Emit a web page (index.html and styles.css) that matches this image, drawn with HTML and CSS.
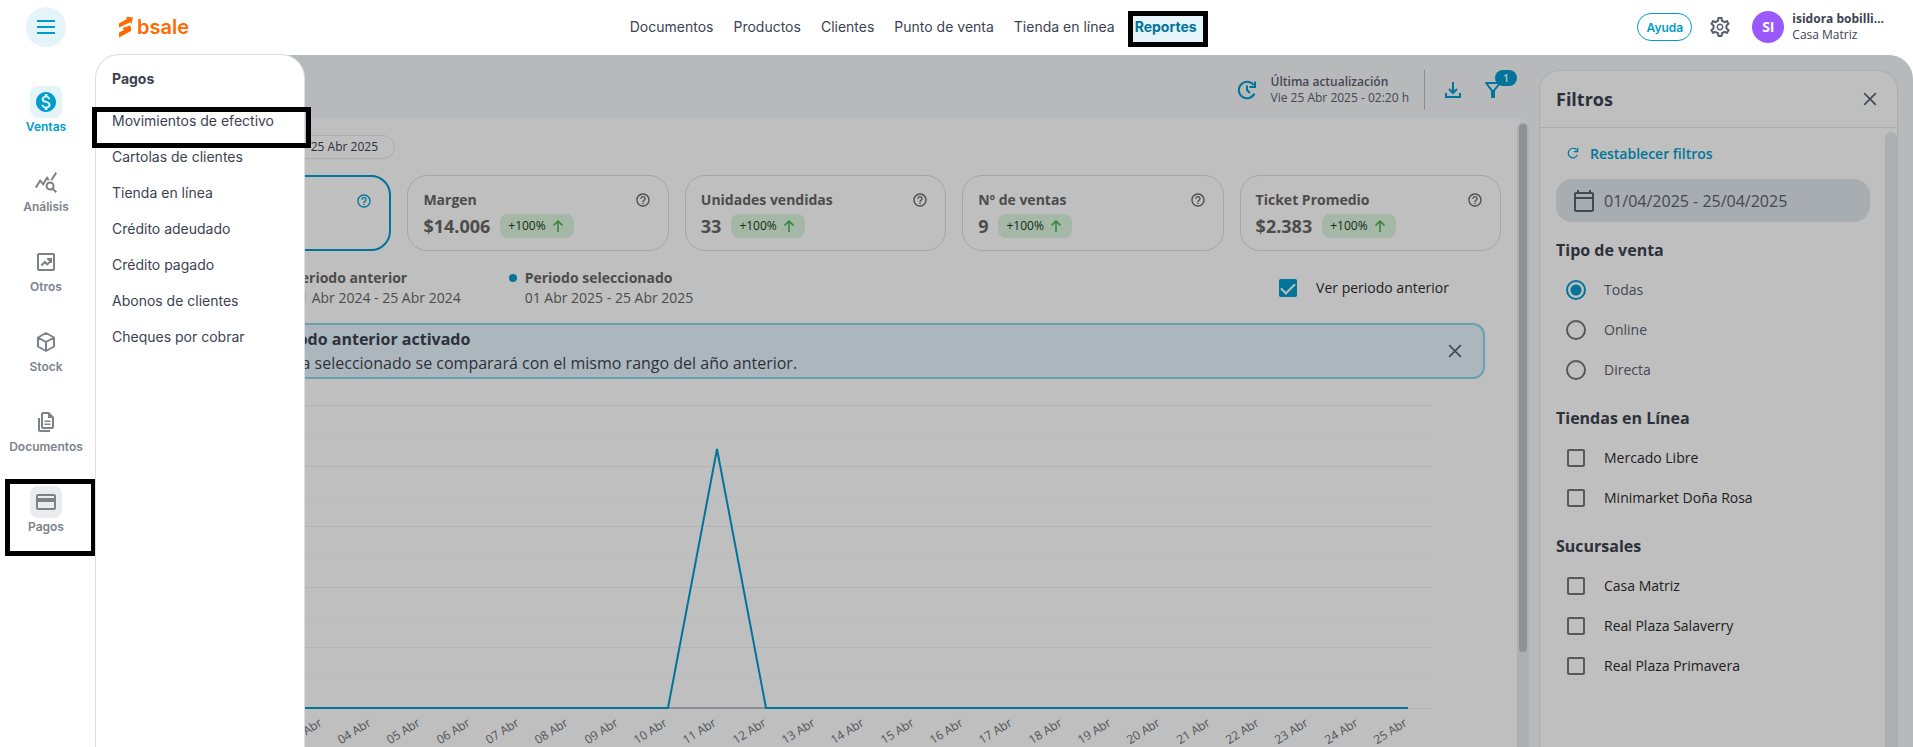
FILE: index.html
```html
<!DOCTYPE html>
<html lang="es">
<head>
    <meta charset="UTF-8">
    <meta name="viewport" content="width=device-width, initial-scale=1.0">
    <title>Bsale - Reportes</title>
    <link rel="stylesheet" href="styles.css">
</head>
<body>
    <!-- iconos reutilizados -->
    <svg class="sprite" aria-hidden="true">
        <symbol id="i-help" viewBox="0 0 24 24"><path d="M11 18h2v-2h-2v2zm1-16C6.48 2 2 6.48 2 12s4.48 10 10 10 10-4.48 10-10S17.52 2 12 2zm0 18c-4.41 0-8-3.59-8-8s3.59-8 8-8 8 3.59 8 8-3.59 8-8 8zm0-14c-2.21 0-4 1.79-4 4h2c0-1.1.9-2 2-2s2 .9 2 2c0 2-3 1.75-3 5h2c0-2.25 3-2.5 3-5 0-2.21-1.79-4-4-4z"/></symbol>
        <symbol id="i-up" viewBox="0 0 16 16"><path d="M8 14V3M3.500 7.500L8 3l4.500 4.500" fill="none" stroke="currentColor" stroke-width="1.5"/></symbol>
        <symbol id="i-close" viewBox="0 0 24 24"><path d="M5 5l14 14M19 5L5 19" fill="none" stroke="currentColor" stroke-width="2"/></symbol>
    </svg>

    <header class="topbar">
        <button class="menu-btn" aria-label="Menú">
            <svg width="24" height="24" viewBox="0 0 24 24"><path d="M3 6h18M3 12h18M3 18h18" stroke="currentColor" stroke-width="2"/></svg>
        </button>
        <a class="logo" href="#">
            <svg width="16" height="22" viewBox="0 0 16 22"><path d="M1 11.500V7.500L9 3 8.300.8 15 1.500 13.500 8 12.200 6.200zM1 21.500V16.500L6 14 4.500 12 12 9.500l1 2v3.500z"/></svg>
            <span>bsale</span>
        </a>
        <nav class="main-nav">
            <a href="#">Documentos</a>
            <a href="#">Productos</a>
            <a href="#">Clientes</a>
            <a href="#">Punto de venta</a>
            <a href="#">Tienda en línea</a>
            <a href="#" class="active">Reportes</a>
        </nav>
        <div class="user-area">
            <button class="help-btn">Ayuda</button>
            <button class="icon-btn gear" aria-label="Configuración">
                <svg width="24" height="24" viewBox="0 0 24 24"><path d="M19.43 12.98c.04-.32.07-.64.07-.98s-.03-.66-.07-.98l2.11-1.65c.19-.15.24-.42.12-.64l-2-3.46c-.12-.22-.39-.3-.61-.22l-2.49 1c-.52-.4-1.08-.73-1.69-.98l-.38-2.65C14.46 2.18 14.25 2 14 2h-4c-.25 0-.46.18-.49.42l-.38 2.65c-.61.25-1.17.59-1.69.98l-2.49-1c-.23-.09-.49 0-.61.22l-2 3.46c-.13.22-.07.49.12.64l2.11 1.65c-.04.32-.07.65-.07.98s.03.66.07.98l-2.11 1.65c-.19.15-.24.42-.12.64l2 3.46c.12.22.39.3.61.22l2.49-1c.52.4 1.08.73 1.69.98l.38 2.65c.03.24.24.42.49.42h4c.25 0 .46-.18.49-.42l.38-2.65c.61-.25 1.17-.59 1.69-.98l2.49 1c.23.09.49 0 .61-.22l2-3.46c.12-.22.07-.49-.12-.64l-2.11-1.65zm-1.98-1.71c.04.31.05.52.05.73 0 .21-.02.43-.05.73l-.14 1.13.89.7 1.08.84-.7 1.21-1.27-.51-1.04-.42-.9.68c-.43.32-.84.56-1.25.73l-1.06.43-.16 1.13-.2 1.35h-1.4l-.19-1.35-.16-1.13-1.06-.43c-.43-.18-.83-.41-1.23-.71l-.91-.7-1.06.43-1.27.51-.7-1.21 1.08-.84.89-.7-.14-1.13c-.03-.31-.05-.54-.05-.74s.02-.43.05-.73l.14-1.13-.89-.7-1.08-.84.7-1.21 1.27.51 1.04.42.9-.68c.43-.32.84-.56 1.25-.73l1.06-.43.16-1.13.2-1.35h1.39l.19 1.35.16 1.13 1.06.43c.43.18.83.41 1.23.71l.91.7 1.06-.43 1.27-.51.7 1.21-1.07.85-.89.7.14 1.13zM12 8.500c-1.930 0-3.500 1.570-3.500 3.500s1.570 3.500 3.500 3.500 3.500-1.570 3.500-3.500-1.570-3.500-3.500-3.500zm0 5.500c-1.100 0-2-.9-2-2s.9-2 2-2 2 .9 2 2-.9 2-2 2z"/></svg>
            </button>
            <span class="avatar">SI</span>
            <div class="user-info">
                <strong>isidora bobilli...</strong>
                <span>Casa Matriz</span>
            </div>
        </div>
    </header>

    <div class="layout">
        <aside class="sidebar">
            <a href="#" class="side-item ventas">
                <span class="side-icon"><svg width="24" height="24" viewBox="0 0 24 24"><path d="M12 2C6.480 2 2 6.480 2 12s4.480 10 10 10 10-4.480 10-10S17.520 2 12 2zm1.410 16.090V20h-2.670v-1.930c-1.710-.36-3.160-1.460-3.270-3.400h1.960c.1 1.050.82 1.870 2.650 1.870 1.960 0 2.400-.98 2.400-1.590 0-.83-.44-1.610-2.670-2.140-2.480-.6-4.180-1.620-4.180-3.670 0-1.720 1.390-2.840 3.110-3.210V4h2.670v1.950c1.860.45 2.790 1.860 2.850 3.390H14.300c-.05-1.110-.64-1.870-2.220-1.870-1.500 0-2.400.68-2.400 1.640 0 .84.65 1.390 2.670 1.910s4.180 1.390 4.180 3.910c-.01 1.830-1.380 2.830-3.120 3.160z"/></svg></span>
                Ventas
            </a>
            <a href="#" class="side-item">
                <span class="side-icon"><svg width="24" height="24" viewBox="0 0 24 24"><path d="M19.880 18.470c.44-.7.7-1.510.7-2.390 0-2.490-2.010-4.500-4.500-4.500s-4.500 2.010-4.500 4.500 2.010 4.500 4.490 4.500c.88 0 1.700-.26 2.390-.7L21.580 23 23 21.580l-3.120-3.110zm-3.800.11c-1.380 0-2.500-1.120-2.500-2.500s1.120-2.500 2.500-2.500 2.500 1.120 2.500 2.500-1.120 2.500-2.500 2.500zm-.36-8.500c-.74.02-1.450.18-2.100.45l-.55-.83-3.800 6.180-3.010-3.520-3.630 5.810L1 17l5-8 3 3.500L13 6l2.720 4.080zm2.590.5c-.64-.28-1.330-.45-2.050-.49L21.380 2 23 3.180l-4.690 7.400z"/></svg></span>
                Análisis
            </a>
            <a href="#" class="side-item">
                <span class="side-icon"><svg width="24" height="24" viewBox="0 0 24 24"><path d="M19 3H5c-1.100 0-2 .9-2 2v14c0 1.100.9 2 2 2h14c1.100 0 2-.9 2-2V5c0-1.100-.9-2-2-2zm0 16H5V5h14v14zM8.200 16.300 6.600 14.700l4.200-4.200 2.600 2.600 1.700-1.800L13 9.200V8h5v5h-1.200l-.4-.4-3.100 3.200-2.600-2.400z"/></svg></span>
                Otros
            </a>
            <a href="#" class="side-item">
                <span class="side-icon"><svg class="outline" width="24" height="24" viewBox="0 0 24 24" stroke-linejoin="round"><path d="M12 3l8 4.500v9L12 21l-8-4.500v-9zM4 7.500l8 4.500 8-4.500M12 12v9"/></svg></span>
                Stock
            </a>
            <a href="#" class="side-item">
                <span class="side-icon"><svg width="24" height="24" viewBox="0 0 24 24"><path d="M15 2H9c-1.100 0-2 .9-2 2v13c0 1.100.9 2 2 2h9c1.100 0 2-.9 2-2V7l-5-5zm3 15H9V4h5v4h4v9zM6 20h10v2H6c-1.100 0-2-.9-2-2V8h2v12zM10.500 10.500h6V12h-6zM10.500 13.500h6V15h-6z"/></svg></span>
                Documentos
            </a>
            <a href="#" class="side-item pagos">
                <span class="side-icon"><svg width="24" height="24" viewBox="0 0 24 24"><path d="M20 4H4c-1.110 0-1.990.89-1.990 2L2 18c0 1.110.89 2 2 2h16c1.110 0 2-.89 2-2V6c0-1.110-.89-2-2-2zm0 14H4v-6h16v6zm0-10H4V6h16v2z"/></svg></span>
                Pagos
            </a>
        </aside>

        <nav class="submenu">
            <h2>Pagos</h2>
            <a href="#" class="marked">Movimientos de efectivo</a>
            <a href="#">Cartolas de clientes</a>
            <a href="#">Tienda en línea</a>
            <a href="#">Crédito adeudado</a>
            <a href="#">Crédito pagado</a>
            <a href="#">Abonos de clientes</a>
            <a href="#">Cheques por cobrar</a>
        </nav>

        <main class="content">
            <section class="report">
                <div class="toolbar">
                    <svg class="blue outline" width="24" height="24" viewBox="0 0 24 24"><path d="M19.500 15.500a8.200 8.200 0 1 1-1-8.500M20 3.500V9h-5.500M12 7.500V12l3 3"/></svg>
                    <div class="update">
                        <strong>Última actualización</strong>
                        <span>Vie 25 Abr 2025 - 02:20 h</span>
                    </div>
                    <button class="icon-btn blue" aria-label="Descargar">
                        <svg class="outline" width="24" height="24" viewBox="0 0 24 24"><path d="M12 4v11M8 11l4 4 4-4M5 15v4h14v-4"/></svg>
                    </button>
                    <button class="icon-btn blue filter-btn" aria-label="Filtros">
                        <svg width="24" height="24" viewBox="0 0 24 24"><path d="M7 6h10l-5.010 6.300L7 6zm-2.750-.39C6.270 8.200 10 13 10 13v6c0 .55.45 1 1 1h2c.55 0 1-.45 1-1v-6s3.720-4.800 5.740-7.390c.51-.66.040-1.610-.79-1.610H5.040c-.83 0-1.300.95-.79 1.610z"/></svg>
                        <span class="count">1</span>
                    </button>
                </div>

                <div class="sheet">
                    <div class="sheet-body">
                        <span class="chip">01 Abr 2025 - 25 Abr 2025</span>

                        <div class="cards">
                            <article class="card selected">
                                <svg class="help"><use href="#i-help"/></svg>
                            </article>
                            <article class="card">
                                <h3>Margen</h3>
                                <svg class="help"><use href="#i-help"/></svg>
                                <p><b>$14.006</b><span class="trend">+100% <svg><use href="#i-up"/></svg></span></p>
                            </article>
                            <article class="card">
                                <h3>Unidades vendidas</h3>
                                <svg class="help"><use href="#i-help"/></svg>
                                <p><b>33</b><span class="trend">+100% <svg><use href="#i-up"/></svg></span></p>
                            </article>
                            <article class="card">
                                <h3>Nº de ventas</h3>
                                <svg class="help"><use href="#i-help"/></svg>
                                <p><b>9</b><span class="trend">+100% <svg><use href="#i-up"/></svg></span></p>
                            </article>
                            <article class="card">
                                <h3>Ticket Promedio</h3>
                                <svg class="help"><use href="#i-help"/></svg>
                                <p><b>$2.383</b><span class="trend">+100% <svg><use href="#i-up"/></svg></span></p>
                            </article>
                        </div>

                        <div class="periods">
                            <div class="period previous">
                                <strong>Periodo anterior</strong>
                                <span>01 Abr 2024 - 25 Abr 2024</span>
                            </div>
                            <div class="period">
                                <strong>Periodo seleccionado</strong>
                                <span>01 Abr 2025 - 25 Abr 2025</span>
                            </div>
                            <label class="option compare"><input type="checkbox" checked> Ver periodo anterior</label>
                        </div>

                        <div class="alert">
                            <div>
                                <strong>Comparar periodo anterior activado</strong>
                                <p>El rango de fecha seleccionado se comparará con el mismo rango del año anterior.</p>
                            </div>
                            <button class="icon-btn" aria-label="Cerrar aviso"><svg width="20" height="20"><use href="#i-close"/></svg></button>
                        </div>

                        <svg class="chart" viewBox="0 0 1371 368">
                            <path class="grid" d="M40 26.500h1263M40 87.500h1263M40 147.500h1263M40 208.500h1263M40 268.500h1263M40 329.500h1263"/>
                            <path class="grid minor" d="M40 56.500h1263M40 117.500h1263M40 178.500h1263M40 238.500h1263M40 299.500h1263"/>
                            <path class="previous-line" d="M94 329H1278"/>
                            <path class="line" d="M94 329H538L587 70 636 329H1278"/>
                            <g class="days">
                                <text transform="translate(193 346) rotate(-32)">03 Abr</text>
                                <text transform="translate(242 346) rotate(-32)">04 Abr</text>
                                <text transform="translate(291 346) rotate(-32)">05 Abr</text>
                                <text transform="translate(341 346) rotate(-32)">06 Abr</text>
                                <text transform="translate(390 346) rotate(-32)">07 Abr</text>
                                <text transform="translate(439 346) rotate(-32)">08 Abr</text>
                                <text transform="translate(489 346) rotate(-32)">09 Abr</text>
                                <text transform="translate(538 346) rotate(-32)">10 Abr</text>
                                <text transform="translate(587 346) rotate(-32)">11 Abr</text>
                                <text transform="translate(637 346) rotate(-32)">12 Abr</text>
                                <text transform="translate(686 346) rotate(-32)">13 Abr</text>
                                <text transform="translate(735 346) rotate(-32)">14 Abr</text>
                                <text transform="translate(785 346) rotate(-32)">15 Abr</text>
                                <text transform="translate(834 346) rotate(-32)">16 Abr</text>
                                <text transform="translate(883 346) rotate(-32)">17 Abr</text>
                                <text transform="translate(933 346) rotate(-32)">18 Abr</text>
                                <text transform="translate(982 346) rotate(-32)">19 Abr</text>
                                <text transform="translate(1031 346) rotate(-32)">20 Abr</text>
                                <text transform="translate(1081 346) rotate(-32)">21 Abr</text>
                                <text transform="translate(1130 346) rotate(-32)">22 Abr</text>
                                <text transform="translate(1179 346) rotate(-32)">23 Abr</text>
                                <text transform="translate(1229 346) rotate(-32)">24 Abr</text>
                                <text transform="translate(1278 346) rotate(-32)">25 Abr</text>
                            </g>
                        </svg>
                    </div>
                    <div class="scrollbar"><span></span></div>
                </div>
            </section>

            <aside class="filters">
                <div class="filters-head">
                    <h2>Filtros</h2>
                    <button class="icon-btn" aria-label="Cerrar filtros"><svg width="20" height="20"><use href="#i-close"/></svg></button>
                </div>
                <div class="filters-main">
                    <form class="filters-body">
                        <button type="reset" class="reset-btn">
                            <svg class="outline" width="14" height="14" viewBox="0 0 24 24"><path d="M19.500 15.500a8.200 8.200 0 1 1-1-8.500M20 3v6.500h-6.500"/></svg>
                            Restablecer filtros
                        </button>
                        <label class="date">
                            <svg width="24" height="24" viewBox="0 0 24 24"><path d="M20 3h-1V1h-2v2H7V1H5v2H4c-1.100 0-2 .9-2 2v16c0 1.100.9 2 2 2h16c1.100 0 2-.9 2-2V5c0-1.100-.9-2-2-2zm0 18H4V10h16v11zm0-13H4V5h16v3z"/></svg>
                            <input type="text" aria-label="Rango de fechas" value="01/04/2025 - 25/04/2025">
                        </label>

                        <h3>Tipo de venta</h3>
                        <label class="option soft"><input type="radio" name="tipo" checked> Todas</label>
                        <label class="option soft"><input type="radio" name="tipo"> Online</label>
                        <label class="option soft"><input type="radio" name="tipo"> Directa</label>

                        <h3>Tiendas en Línea</h3>
                        <label class="option"><input type="checkbox"> Mercado Libre</label>
                        <label class="option"><input type="checkbox"> Minimarket Doña Rosa</label>

                        <h3>Sucursales</h3>
                        <label class="option"><input type="checkbox"> Casa Matriz</label>
                        <label class="option"><input type="checkbox"> Real Plaza Salaverry</label>
                        <label class="option"><input type="checkbox"> Real Plaza Primavera</label>
                    </form>
                    <div class="filters-track"></div>
                </div>
            </aside>
            <div class="overlay"></div>
        </main>
    </div>
</body>
</html>
```
FILE: styles.css
```css
* {
    box-sizing: border-box;
}

body {
    margin: 0;
    height: 100vh;
    display: flex;
    flex-direction: column;
    overflow: hidden;
    font-family: "Open Sans", "Noto Sans", sans-serif;
    font-size: 14px;
    line-height: 20px;
    color: #3c4251;
    background-color: #ffffff;
}

h2, h3, p {
    margin: 0;
}

a {
    color: inherit;
    text-decoration: none;
}

button {
    font-family: inherit;
    background: none;
    border: none;
    padding: 0;
    cursor: pointer;
}

svg {
    display: block;
    flex: none;
    fill: currentColor;
}

.outline {
    fill: none;
    stroke: currentColor;
    stroke-width: 2;
}

.sprite {
    position: absolute;
    width: 0;
    height: 0;
}

.icon-btn {
    display: flex;
    color: #5b6070;
}

.blue {
    color: #009ccc;
}

/* Barra superior */
.topbar {
    flex: none;
    height: 55px;
    display: flex;
    align-items: center;
    padding: 0 29px 1px 26px;
}

.menu-btn {
    display: flex;
    align-items: center;
    justify-content: center;
    width: 40px;
    height: 40px;
    border-radius: 50%;
    background-color: #e5f4f9;
    color: #009ccc;
}

.logo {
    display: flex;
    align-items: center;
    gap: 3px;
    margin-left: 52px;
    color: #ff6a00;
    font-family: Inter, sans-serif;
    font-size: 20px;
    font-weight: 600;
}

.main-nav {
    flex: 1;
    display: flex;
    justify-content: center;
    gap: 20px;
    font-family: Inter, sans-serif;
}

.main-nav a.active {
    position: relative;
    z-index: 0;
    font-weight: 700;
    color: #007599;
}

.main-nav a.active::after {
    content: "";
    position: absolute;
    z-index: -1;
    inset: -6px -11px -10px -7px;
    border: 5px solid #000000;
    background-color: #e5f4f9;
}

.user-area {
    display: flex;
    align-items: center;
}

.help-btn {
    width: 55px;
    height: 28px;
    border: 1px solid #009ccc;
    border-radius: 14px;
    color: #009ccc;
    font-family: Inter, sans-serif;
    font-size: 12px;
    font-weight: 600;
}

.gear {
    margin: 0 20px 0 16px;
}

.avatar {
    width: 32px;
    height: 32px;
    border-radius: 50%;
    background-color: #9b59fb;
    color: #ffffff;
    font-weight: 700;
    line-height: 32px;
    text-align: center;
}

.user-info {
    display: flex;
    flex-direction: column;
    margin-left: 8px;
    font-size: 12px;
    line-height: 16px;
}

/* Menú lateral */
.layout {
    flex: 1;
    min-height: 0;
    display: flex;
    position: relative;
}

.sidebar {
    flex: none;
    width: 96px;
    display: flex;
    flex-direction: column;
    gap: 30px;
    padding: 31px 4px 0 0;
    font-family: Inter, sans-serif;
    font-size: 12px;
    font-weight: 600;
    line-height: 18px;
    color: #7d828a;
}

.side-item {
    display: flex;
    flex-direction: column;
    align-items: center;
    position: relative;
}

.side-icon {
    display: flex;
    align-items: center;
    justify-content: center;
    width: 32px;
    height: 32px;
    border-radius: 8px;
}

.ventas {
    color: #009ccc;
}

.ventas .side-icon {
    background-color: #e5f4f9;
}

.pagos .side-icon {
    background-color: #ebecee;
}

.pagos::after {
    content: "";
    position: absolute;
    inset: -7px -4px -20px 5px;
    border: 5px solid #000000;
}

.submenu {
    position: absolute;
    z-index: 2;
    left: 95px;
    top: -1px;
    bottom: 0;
    width: 210px;
    padding: 7px 16px;
    border: 1px solid #dcdee2;
    border-bottom: none;
    border-radius: 24px 24px 0 0;
    background-color: #ffffff;
    font-family: Inter, sans-serif;
}

.submenu h2 {
    padding: 7px 0;
    margin-bottom: 7px;
    font-size: 14px;
    font-weight: 700;
    line-height: 20px;
}

.submenu a {
    display: block;
    padding: 8px 0;
}

.submenu .marked {
    position: relative;
}

.submenu .marked::after {
    content: "";
    position: absolute;
    inset: 4px -23px -9px -20px;
    border: 5px solid #000000;
}

/* Contenido */
.content {
    flex: 1;
    min-width: 0;
    display: flex;
    gap: 10px;
    padding-right: 15px;
    position: relative;
    overflow: hidden;
    border-radius: 24px 24px 0 0;
    background-color: #f5f7fa;
}

.overlay {
    position: absolute;
    inset: 0;
    background-color: rgba(0, 0, 0, 0.25);
}

.report {
    flex: 1;
    min-width: 0;
    display: flex;
    flex-direction: column;
}

.toolbar {
    display: flex;
    align-items: center;
    justify-content: flex-end;
    height: 63px;
    padding: 7px 24px 0 0;
    gap: 16px;
}

.update {
    display: flex;
    flex-direction: column;
    justify-content: center;
    height: 40px;
    margin-left: -4px;
    padding-right: 15px;
    border-right: 1px solid #b9bcc4;
    font-size: 12px;
    line-height: 16px;
    color: #5b6070;
}

.update strong {
    font-weight: 600;
}

.filter-btn {
    position: relative;
}

.count {
    position: absolute;
    left: 14px;
    top: -8px;
    width: 22px;
    height: 16px;
    border-radius: 8px;
    background-color: #009ccc;
    color: #ffffff;
    font-size: 10px;
    font-weight: 600;
    line-height: 16px;
}

.sheet {
    flex: 1;
    min-height: 0;
    display: flex;
    border-top-right-radius: 12px;
    background-color: #ffffff;
}

.sheet-body {
    flex: 1;
    min-width: 0;
    overflow: hidden;
    padding: 17px 16px 0 34px;
}

.scrollbar {
    width: 12px;
    margin-top: 4px;
    padding: 2px;
    border-radius: 6px 6px 0 0;
    background-color: #e9eaee;
}

.scrollbar span {
    display: block;
    height: 85%;
    border-radius: 4px;
    background-color: #c1c2c4;
}

.chip {
    display: block;
    width: 265px;
    padding: 0 16px;
    border: 1px solid #e6e7ea;
    border-radius: 12px;
    font-size: 12px;
    line-height: 22px;
    text-align: right;
}

.cards {
    display: grid;
    grid-template-columns: repeat(5, 1fr);
    gap: 16px;
    margin-top: 16px;
}

.card {
    display: grid;
    grid-template-columns: 1fr auto;
    align-content: start;
    height: 76px;
    padding: 14px 15px 0;
    border: 1px solid #dcdde0;
    border-radius: 20px;
    color: #666666;
}

.card.selected {
    border: 2px solid #009ccc;
    color: #009ccc;
}

.card.selected .help {
    grid-column: 2;
}

.card h3 {
    font-size: 14px;
    font-weight: 700;
    line-height: 20px;
}

.card p {
    grid-column: 1 / -1;
    display: flex;
    align-items: center;
    gap: 10px;
    margin-top: 4px;
    font-size: 18px;
    line-height: 24px;
}

.help {
    width: 16px;
    height: 16px;
    margin: 2px;
}

.trend {
    display: flex;
    align-items: center;
    gap: 4px;
    padding: 0 8px;
    border-radius: 8px;
    background-color: #dcf5de;
    color: #14401c;
    font-size: 12px;
}

.trend svg {
    width: 16px;
    height: 16px;
    color: #3fae49;
}

.periods {
    display: flex;
    gap: 64px;
    padding: 17px 52px 15px 162px;
}

.period {
    display: flex;
    flex-direction: column;
    position: relative;
    color: #666666;
}

.period::before {
    content: "";
    position: absolute;
    left: -16px;
    top: 6px;
    width: 8px;
    height: 8px;
    border-radius: 50%;
    background-color: #009ccc;
}

.period.previous::before {
    background-color: #a6adbb;
}

.compare {
    margin-left: auto;
}

.alert {
    display: flex;
    align-items: center;
    justify-content: space-between;
    margin-right: 16px;
    padding: 2px 18px 2px 50px;
    border: 2px solid #8fd5ee;
    border-radius: 12px;
    background-color: #e6f5fc;
    font-size: 16px;
    line-height: 24px;
}

.chart {
    width: 100%;
    height: auto;
}

.grid {
    fill: none;
    stroke: #f0f1f4;
}

.grid.minor {
    stroke: #fafafb;
}

.line,
.previous-line {
    fill: none;
    stroke: #009ccc;
    stroke-width: 2;
}

.previous-line {
    stroke: #bcc0cc;
}

.days {
    font-size: 12px;
    text-anchor: end;
    fill: #6e7079;
}

/* Panel de filtros */
.filters {
    flex: none;
    width: 359px;
    display: flex;
    flex-direction: column;
    margin-top: 15px;
    overflow: hidden;
    border: 1px solid #e4e7ea;
    border-bottom: none;
    border-radius: 20px 20px 0 0;
    background-color: #ffffff;
}

.filters-head {
    display: flex;
    align-items: center;
    justify-content: space-between;
    height: 57px;
    padding: 0 17px 0 16px;
    border-bottom: 1px solid #e4e7ea;
}

.filters-head h2 {
    font-size: 18px;
    line-height: 24px;
}

.filters-main {
    flex: 1;
    display: flex;
}

.filters-body {
    flex: 1;
    padding: 7px 15px 0 16px;
}

.filters-track {
    width: 12px;
    margin-top: 4px;
    border-radius: 6px 6px 0 0;
    background-color: #e9eaee;
}

.reset-btn {
    display: flex;
    align-items: center;
    gap: 10px;
    height: 36px;
    padding: 0 10px;
    color: #009ccc;
    font-size: 14px;
    font-weight: 600;
}

.date {
    display: flex;
    align-items: center;
    gap: 8px;
    height: 43px;
    margin-top: 8px;
    padding: 0 16px;
    border-radius: 16px;
    background-color: #e1e7ec;
    color: #5b6070;
}

.date input {
    flex: 1;
    min-width: 0;
    padding: 0;
    border: none;
    background: none;
    color: inherit;
    font-family: inherit;
    font-size: 16px;
}

.filters-body h3 {
    margin-top: 8px;
    font-size: 16px;
    line-height: 40px;
}

.option {
    display: flex;
    align-items: center;
    gap: 18px;
    height: 40px;
    padding-left: 10px;
    color: #2b2b2b;
}

.option.soft {
    color: #5b6070;
}

.option input {
    appearance: none;
    width: 18px;
    height: 18px;
    margin: 1px;
    border: 2px solid #757575;
    border-radius: 2px;
}

.option input[type="radio"] {
    width: 20px;
    height: 20px;
    margin: 0;
    border-radius: 50%;
}

.option input[type="radio"]:checked {
    border-color: #009ccc;
    background: radial-gradient(circle, #009ccc 5px, transparent 6px);
}

.option input[type="checkbox"]:checked {
    display: flex;
    align-items: center;
    justify-content: center;
    border-color: #009ccc;
    background-color: #009ccc;
}

.option input[type="checkbox"]:checked::before {
    content: "";
    width: 6px;
    height: 12px;
    margin-bottom: 3px;
    border: solid #ffffff;
    border-width: 0 2px 2px 0;
    transform: rotate(45deg);
}
```
